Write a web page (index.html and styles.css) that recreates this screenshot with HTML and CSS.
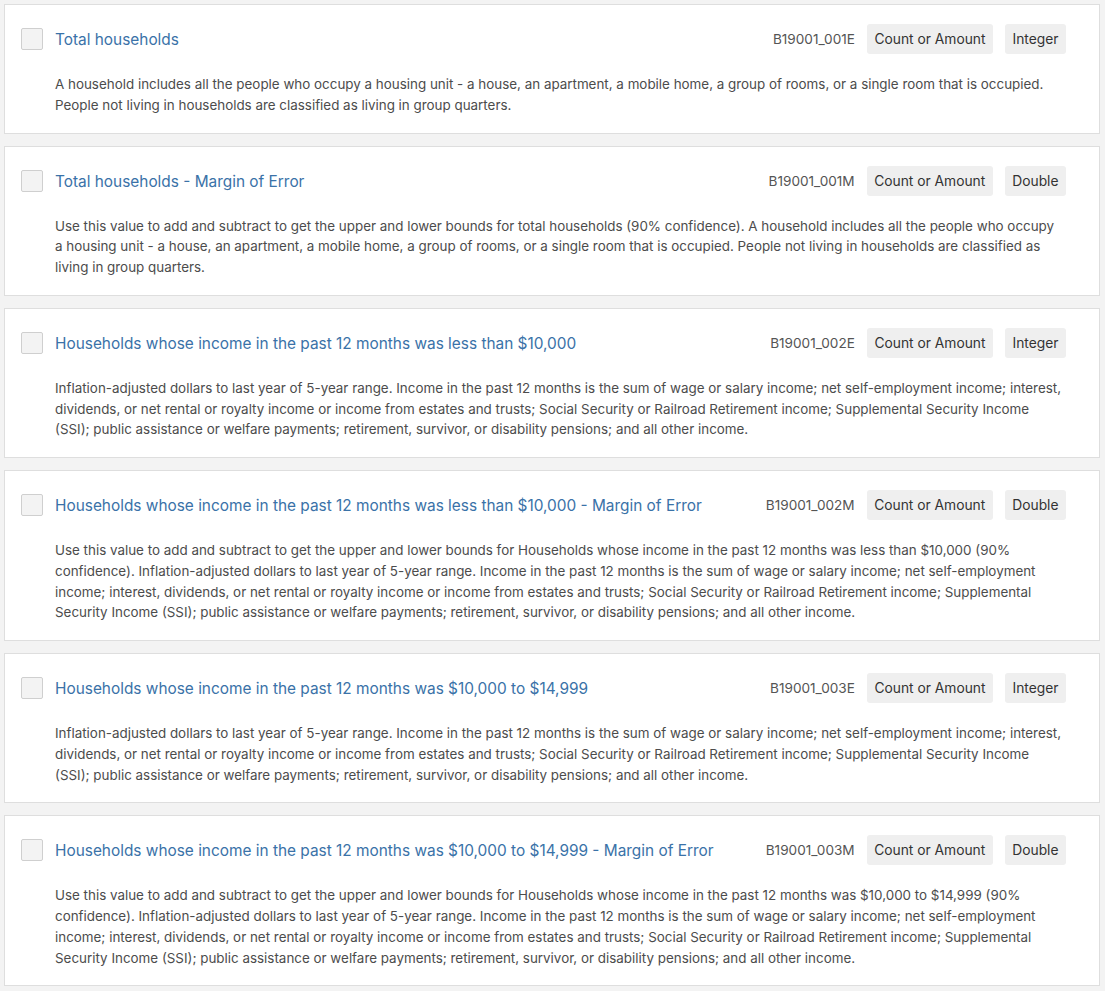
FILE: index.html
```html
<!DOCTYPE html>
<html lang="en">
<head>
    <meta charset="UTF-8" />
    <title>Variables</title>
    <link rel="stylesheet" href="styles.css">
</head>
<body>
<main class="field-list">

    <section class="field-card">
        <div class="field-head">
            <span class="check"></span>
            <span class="field-title">Total households</span>
            <span class="field-code">B19001_001E</span>
            <span class="pill">Count or Amount</span>
            <span class="pill">Integer</span>
        </div>
        <p class="field-desc">A household includes all the people who occupy a housing unit - a house, an apartment, a mobile home, a group of rooms, or a single room that is occupied. People not living in households are classified as living in group quarters.</p>
    </section>

    <section class="field-card">
        <div class="field-head">
            <span class="check"></span>
            <span class="field-title">Total households - Margin of Error</span>
            <span class="field-code">B19001_001M</span>
            <span class="pill">Count or Amount</span>
            <span class="pill">Double</span>
        </div>
        <p class="field-desc">Use this value to add and subtract to get the upper and lower bounds for total households (90% confidence). A household includes all the people who occupy a housing unit - a house, an apartment, a mobile home, a group of rooms, or a single room that is occupied. People not living in households are classified as living in group quarters.</p>
    </section>

    <section class="field-card">
        <div class="field-head">
            <span class="check"></span>
            <span class="field-title">Households whose income in the past 12 months was less than $10,000</span>
            <span class="field-code">B19001_002E</span>
            <span class="pill">Count or Amount</span>
            <span class="pill">Integer</span>
        </div>
        <p class="field-desc">Inflation-adjusted dollars to last year of 5-year range. Income in the past 12 months is the sum of wage or salary income; net self-employment income; interest, dividends, or net rental or royalty income or income from estates and trusts; Social Security or Railroad Retirement income; Supplemental Security Income (SSI); public assistance or welfare payments; retirement, survivor, or disability pensions; and all other income.</p>
    </section>

    <section class="field-card">
        <div class="field-head">
            <span class="check"></span>
            <span class="field-title">Households whose income in the past 12 months was less than $10,000 - Margin of Error</span>
            <span class="field-code">B19001_002M</span>
            <span class="pill">Count or Amount</span>
            <span class="pill">Double</span>
        </div>
        <p class="field-desc">Use this value to add and subtract to get the upper and lower bounds for Households whose income in the past 12 months was less than $10,000 (90% confidence). Inflation-adjusted dollars to last year of 5-year range. Income in the past 12 months is the sum of wage or salary income; net self-employment income; interest, dividends, or net rental or royalty income or income from estates and trusts; Social Security or Railroad Retirement income; Supplemental Security Income (SSI); public assistance or welfare payments; retirement, survivor, or disability pensions; and all other income.</p>
    </section>

    <section class="field-card">
        <div class="field-head">
            <span class="check"></span>
            <span class="field-title">Households whose income in the past 12 months was $10,000 to $14,999</span>
            <span class="field-code">B19001_003E</span>
            <span class="pill">Count or Amount</span>
            <span class="pill">Integer</span>
        </div>
        <p class="field-desc">Inflation-adjusted dollars to last year of 5-year range. Income in the past 12 months is the sum of wage or salary income; net self-employment income; interest, dividends, or net rental or royalty income or income from estates and trusts; Social Security or Railroad Retirement income; Supplemental Security Income (SSI); public assistance or welfare payments; retirement, survivor, or disability pensions; and all other income.</p>
    </section>

    <section class="field-card">
        <div class="field-head">
            <span class="check"></span>
            <span class="field-title">Households whose income in the past 12 months was $10,000 to $14,999 - Margin of Error</span>
            <span class="field-code">B19001_003M</span>
            <span class="pill">Count or Amount</span>
            <span class="pill">Double</span>
        </div>
        <p class="field-desc">Use this value to add and subtract to get the upper and lower bounds for Households whose income in the past 12 months was $10,000 to $14,999 (90% confidence). Inflation-adjusted dollars to last year of 5-year range. Income in the past 12 months is the sum of wage or salary income; net self-employment income; interest, dividends, or net rental or royalty income or income from estates and trusts; Social Security or Railroad Retirement income; Supplemental Security Income (SSI); public assistance or welfare payments; retirement, survivor, or disability pensions; and all other income.</p>
    </section>

</main>
</body>
</html>
```

FILE: styles.css
```css
* {
    box-sizing: border-box;
    font-family: 'Inter', 'Liberation Sans', sans-serif;
}
body {
    margin: 0;
    padding: 0;
    background: #f3f3f3;
}
.field-list {
    display: flex;
    flex-direction: column;
    gap: 12px;
    padding: 4px 5px 4px 4px;
}
.field-card {
    background: #fff;
    border: 1px solid #dedede;
    padding: 19px 33px 17px 16px;
}
.field-head {
    display: flex;
    align-items: center;
    gap: 12px;
    height: 30px;
}
.check {
    width: 22px;
    height: 22px;
    flex: none;
    background: #f3f3f3;
    border: 1px solid #cfcfcf;
    border-radius: 2px;
}
.field-title {
    flex: 1;
    font-size: 15.4px;
    padding-top: 1px;
    color: #3a72a8;
}
.field-code {
    font-size: 13.6px;
    color: #555;
}
.pill {
    font-size: 13.8px;
    color: #333;
    background: #efefef;
    border-radius: 3px;
    padding: 0 7.5px;
    height: 30px;
    line-height: 30px;
}
.field-desc {
    margin: 20px 3px 0 34px;
    font-size: 13.4px;
    line-height: 20.75px;
    color: #4c4c4c;
}
```
